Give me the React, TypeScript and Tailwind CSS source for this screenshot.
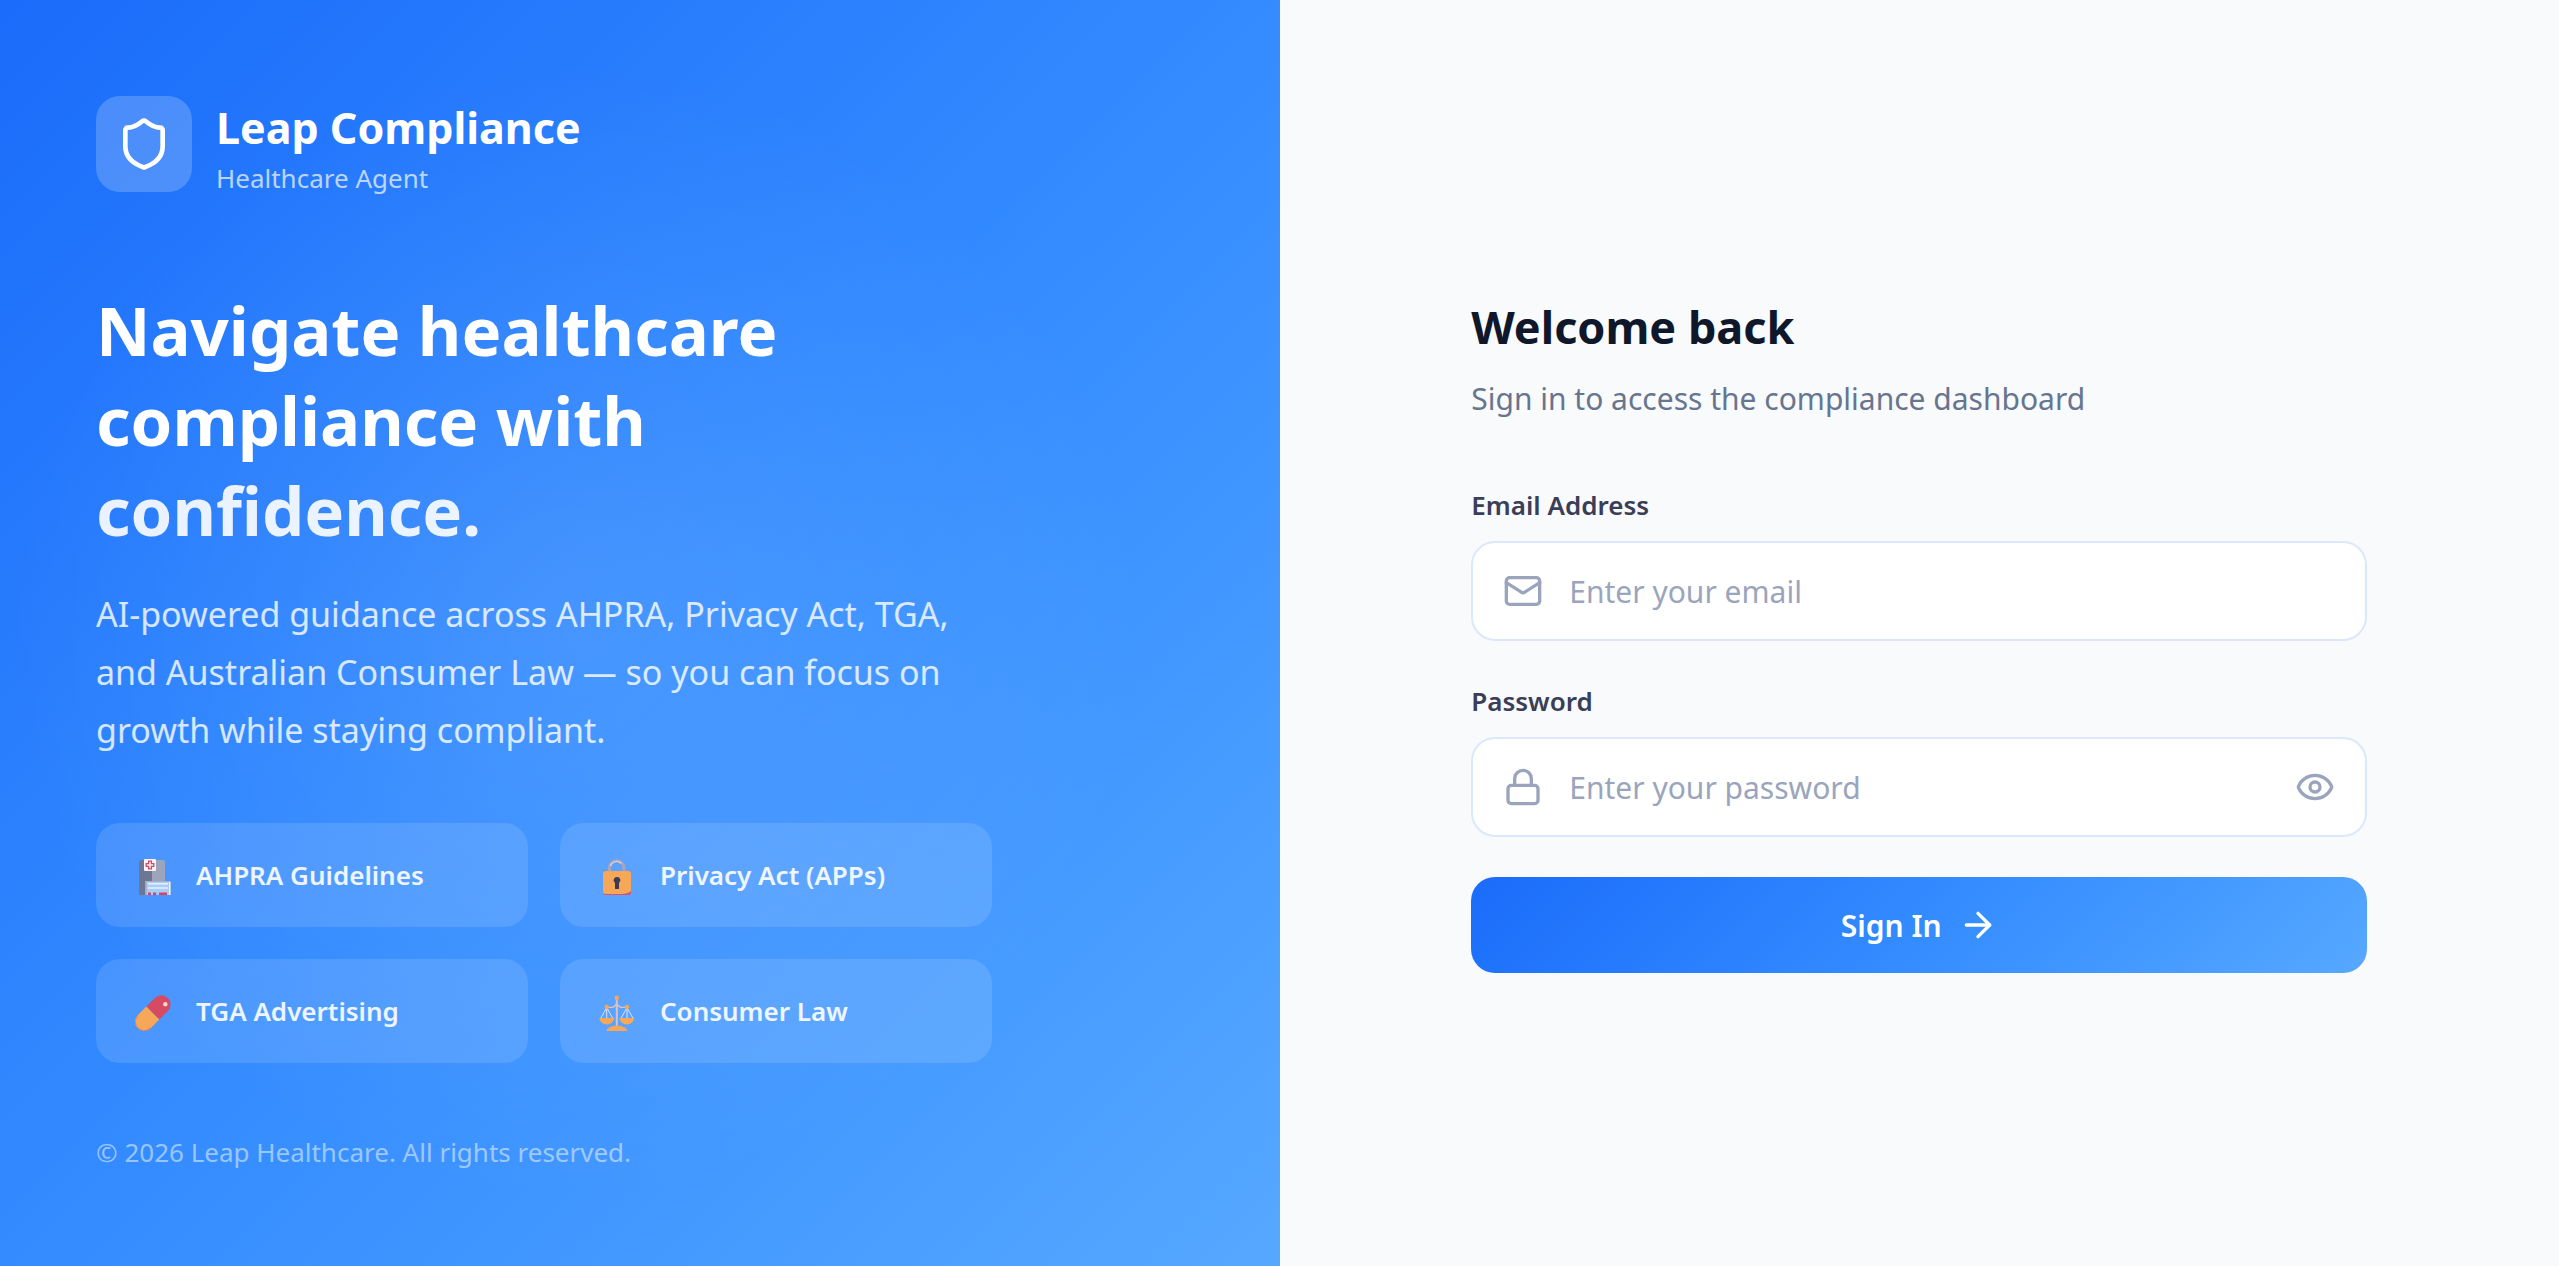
import { useState } from "react";
import type { ReactNode } from "react";
import { ArrowRight, Eye, EyeOff, Lock, Mail, Shield } from "lucide-react";

const iconClass = "h-10 w-9 shrink-0 overflow-visible";

function HospitalIcon() {
  return (
    <svg viewBox="0 0 36 40" className={iconClass} aria-hidden="true">
      <path d="M4 5h23a2 2 0 0 1 2 2v33H3V6z" fill="#9da5bb" />
      <path d="M3 6l1-1h5v11h7v10H9v14H3z" fill="#6d7792" />
      <rect x="8" y="4" width="12" height="12" rx="1" fill="#f3f5fb" />
      <path d="M12.600 6.200h2.800v2.400h2.400v2.800h-2.400v2.400h-2.800v-2.400h-2.400V8.600h2.400z" fill="none" stroke="#d9475f" strokeWidth="1.300" />
      <path d="M9.500 26h25v14h-25z" fill="#a9b2c9" />
      <path d="M11 27h21.500v13H11z" fill="#a9cdfb" />
      <path d="M12 28.700h20M12 33h20" stroke="#e6f0fe" strokeWidth="1.600" />
      <path d="M32.800 27H34.500v13h-1.700z" fill="#e6f0fe" />
      <path d="M12 37.500h3V40h-3zM17 37.500h3.200V40H17zM23 37.500h8V40h-8z" fill="#d5455f" />
    </svg>
  );
}

function PadlockIcon() {
  return (
    <svg viewBox="0 0 36 40" className={iconClass} aria-hidden="true">
      <path d="M9.500 17v-4a7.200 7.200 0 0 1 14.400 0v4" fill="none" stroke="#a9a5bb" strokeWidth="3" />
      <path d="M10.400 11a6.500 6.500 0 0 1 11-2.500" fill="none" stroke="#dccfd3" strokeWidth="1.400" />
      <rect x="3" y="16" width="28" height="24" rx="2.500" fill="#d9536a" />
      <path d="M5.500 16h23a2.500 2.500 0 0 1 2.500 2.500v17.500q-3 2.500-9 3H5.500A2.500 2.500 0 0 1 3 36.500v-18A2.500 2.500 0 0 1 5.500 16z" fill="#f6a757" />
      <path d="M17 22a3.300 3.300 0 0 1 2 6v5.500a.6.6 0 0 1-.6.6h-2.800a.6.6 0 0 1-.6-.6V28a3.300 3.300 0 0 1 2-6z" fill="#3d3a55" />
    </svg>
  );
}

function PillIcon() {
  return (
    <svg viewBox="0 0 36 40" className={iconClass} aria-hidden="true">
      <g transform="rotate(-45 16.800 22.100)">
        <path d="M16.800 12.900H29a9.200 9.200 0 0 1 0 18.400H16.800z" fill="#d64a63" />
        <path d="M16.800 12.900H4.600a9.200 9.200 0 0 0 0 18.400h12.200z" fill="#f6a757" />
        <path d="M4.600 13.400a8.700 8.700 0 0 0 0 17.400" fill="none" stroke="#dd6a5e" strokeWidth="1" strokeDasharray="1 1" />
      </g>
      <circle cx="29.300" cy="13.300" r="2.200" fill="#fbd9c4" />
    </svg>
  );
}

function ScalesIcon() {
  return (
    <svg viewBox="0 0 36 40" className={iconClass} aria-hidden="true">
      <path d="M6.700 16.300h6q3-.8 4.100-4.300q1.100 3.500 4.100 4.300h6" fill="none" stroke="#dcc4c4" strokeWidth="1.200" />
      <path d="M6.500 17L.6 27.500M6.900 17l5.900 10.500M26.800 17l-5.900 10.500M27.200 17l5.900 10.500M6.700 17v10M27 17v10" fill="none" stroke="#dde3f3" strokeWidth="1" />
      <path d="M16.800 7v28.500" stroke="#d9c2c4" strokeWidth="2" />
      <circle cx="16.800" cy="6.700" r="2.200" fill="#f6a757" />
      <circle cx="6.700" cy="16" r="2.200" fill="#f6a757" />
      <circle cx="27" cy="16" r="2.200" fill="#f6a757" />
      <path d="M-.7 27h15a7.500 6.500 0 0 1-15 0zM19.400 27h15a7.500 6.500 0 0 1-15 0z" fill="#f6a757" />
      <path d="M6.300 40a10.500 5.400 0 0 1 21 0z" fill="#f6a757" />
    </svg>
  );
}

const topics: { label: string; icon: ReactNode }[] = [
  { label: "AHPRA Guidelines", icon: <HospitalIcon /> },
  { label: "Privacy Act (APPs)", icon: <PadlockIcon /> },
  { label: "TGA Advertising", icon: <PillIcon /> },
  { label: "Consumer Law", icon: <ScalesIcon /> },
];

function BrandPanel() {
  return (
    <section className="flex flex-col bg-[radial-gradient(circle_at_45%_50%,rgba(255,255,255,0.1)_0%,transparent_60%),linear-gradient(135deg,#1a6cfa_0%,#338bff_50%,#56a8ff_100%)] p-24 text-white">
      <header className="flex items-start gap-6">
        <div className="flex size-24 shrink-0 items-center justify-center rounded-3xl bg-white/20">
          <Shield className="size-14" strokeWidth={2} aria-hidden="true" />
        </div>
        <div>
          <p className="text-[43px] leading-[64px] font-bold">Leap Compliance</p>
          <p className="text-[26px] leading-[36px] text-white/70">Healthcare Agent</p>
        </div>
      </header>

      <div className="mt-[89px] mb-16 max-w-[896px]">
        <h1 className="text-[67px] leading-[90px] font-bold">
          Navigate healthcare
          <br />
          compliance with
          <br />
          <span className="text-white/90">confidence.</span>
        </h1>
        <p className="mt-[30px] text-[34px] leading-[58px] text-white/80">
          AI-powered guidance across AHPRA, Privacy Act, TGA, and Australian Consumer Law — so you can focus on growth
          while staying compliant.
        </p>
        <ul className="mt-16 grid grid-cols-2 gap-8">
          {topics.map((topic) => (
            <li key={topic.label} className="flex items-center gap-6 rounded-3xl bg-white/12 px-10 py-8">
              {topic.icon}
              <span className="text-[26px] leading-[40px] font-semibold text-white/90">{topic.label}</span>
            </li>
          ))}
        </ul>
      </div>

      <footer className="mt-auto text-[26px] leading-[36px] text-white/50">
        © 2026 Leap Healthcare. All rights reserved.
      </footer>
    </section>
  );
}

const labelClass = "block text-[26px] leading-[40px] font-semibold text-[#3b3e57]";
const inputClass =
  "h-[100px] w-full rounded-3xl border-2 border-[#dbe8fb] bg-white pl-24 text-[30px] text-slate-900 outline-none placeholder:text-[#9aa5bd] focus:border-blue-500";
const fieldIconClass = "pointer-events-none absolute top-1/2 left-8 size-10 -translate-y-1/2 text-[#9aa5bd]";

function SignInPanel() {
  const [visible, setVisible] = useState(false);
  return (
    <main className="flex items-center justify-center bg-slate-50 px-8">
      <div className="w-full max-w-[896px]">
        <h2 className="text-[45px] leading-[68px] font-bold text-slate-900">Welcome back</h2>
        <p className="mt-4 text-[30px] leading-[44px] text-[#67758f]">Sign in to access the compliance dashboard</p>

        <form className="mt-16 flex flex-col gap-10" onSubmit={(event) => event.preventDefault()}>
          <div>
            <label htmlFor="email" className={labelClass}>
              Email Address
            </label>
            <div className="relative mt-4">
              <Mail className={fieldIconClass} aria-hidden="true" />
              <input id="email" type="email" placeholder="Enter your email" className={`${inputClass} pr-8`} />
            </div>
          </div>
          <div>
            <label htmlFor="password" className={labelClass}>
              Password
            </label>
            <div className="relative mt-4">
              <Lock className={fieldIconClass} aria-hidden="true" />
              <input
                id="password"
                type={visible ? "text" : "password"}
                placeholder="Enter your password"
                className={`${inputClass} pr-24`}
              />
              <button
                type="button"
                aria-label={visible ? "Hide password" : "Show password"}
                onClick={() => setVisible(!visible)}
                className="absolute top-1/2 right-8 -translate-y-1/2 text-[#9aa5bd]"
              >
                {visible ? <EyeOff className="size-10" /> : <Eye className="size-10" />}
              </button>
            </div>
          </div>
          <button
            type="submit"
            className="flex h-24 items-center justify-center gap-4 rounded-3xl bg-[linear-gradient(135deg,#1a6cfa_0%,#338bff_50%,#56a8ff_100%)] text-[30px] font-semibold text-white"
          >
            Sign In
            <ArrowRight className="size-10" aria-hidden="true" />
          </button>
        </form>
      </div>
    </main>
  );
}

export default function App() {
  return (
    <div className="grid min-h-screen grid-cols-2 font-['Noto_Sans',sans-serif]">
      <BrandPanel />
      <SignInPanel />
    </div>
  );
}
